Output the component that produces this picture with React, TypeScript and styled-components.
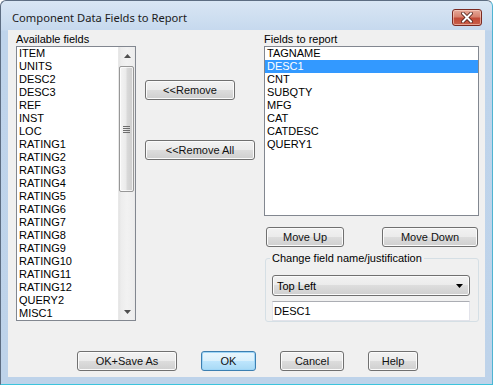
import React from 'react';
import styled, { createGlobalStyle } from 'styled-components';

const Global = createGlobalStyle`
  html, body { margin: 0; padding: 0; background: #ffffff; }
  body { font-family: "Liberation Sans", Arial, sans-serif; font-size: 11px; color: #000; }
  * { box-sizing: border-box; }
`;

const Window = styled.div`
  width: 493px;
  height: 385px;
  display: flex;
  flex-direction: column;
  border: 1px solid;
  border-color: #5d6d82 #4fb4d2 #3cc3dc #5d6d82;
  border-radius: 6px 6px 0 0;
  background: linear-gradient(to bottom, #d9e6f4 0px, #c6d9ee 29px, #bfd4eb 30px, #bed3ea 100%);
`;

const TitleBar = styled.div`
  height: 29px;
  flex: none;
  display: flex;
  align-items: flex-start;
  padding: 0 10px 0 11px;
`;

const Title = styled.div`
  font-family: "Noto Sans", "Open Sans", sans-serif;
  font-size: 11.2px;
  line-height: 16px;
  padding-top: 9px;
  color: #1b1b1b;
`;

const CloseButton = styled.div`
  margin-left: auto;
  margin-top: 8px;
  width: 30px;
  height: 17px;
  border: 1px solid #7a2a22;
  border-radius: 3px;
  background: linear-gradient(to bottom, #e6a999 0%, #d7826f 45%, #c14a37 55%, #c9604a 100%);
  box-shadow: inset 0 0 0 1px rgba(255, 220, 210, 0.55);
  display: flex;
  align-items: center;
  justify-content: center;
`;

const Client = styled.div`
  flex: 1;
  margin: 0 7px 7px 7px;
  background: #f0f0f0;
  padding: 3px 6px 6px 8px;
  display: flex;
  flex-direction: column;
`;

const Top = styled.div`
  display: flex;
  align-items: flex-start;
`;

const Column = styled.div<{ $width: number; $gap?: number }>`
  width: ${(p) => p.$width}px;
  margin-left: ${(p) => p.$gap ?? 0}px;
  display: flex;
  flex-direction: column;
`;

const Label = styled.div`
  height: 13px;
  line-height: 13px;
  white-space: nowrap;
`;

const ListBox = styled.div<{ $height: number }>`
  height: ${(p) => p.$height}px;
  border: 1px solid #828790;
  background: #fff;
  display: flex;
  overflow: hidden;
`;

const Items = styled.div`
  flex: 1;
  display: flex;
  flex-direction: column;
`;

const Item = styled.div<{ $selected?: boolean }>`
  height: 13px;
  line-height: 13px;
  padding-left: 2px;
  white-space: nowrap;
  background: ${(p) => (p.$selected ? '#3399ff' : 'transparent')};
  color: ${(p) => (p.$selected ? '#fff' : '#000')};
`;

const ScrollBar = styled.div`
  width: 17px;
  display: flex;
  flex-direction: column;
  background: linear-gradient(to right, #e3e3e3 0px, #ededed 2px, #f2f2f2 8px, #ededed 15px, #e3e3e3 17px);
  border-left: 1px solid #e8e8e8;
`;

const Arrow = styled.div`
  height: 17px;
  flex: none;
  display: flex;
  align-items: center;
  justify-content: center;
`;

const Track = styled.div`
  flex: 1;
  padding: 2px 1px 0 0;
`;

const Thumb = styled.div<{ $height: number }>`
  height: ${(p) => p.$height}px;
  border: 1px solid #979797;
  border-radius: 2px;
  background: linear-gradient(to right, #f4f4f4 0%, #ebebeb 45%, #d9d9d9 55%, #cdcdcd 100%);
  box-shadow: inset 0 0 0 1px rgba(255, 255, 255, 0.7);
  display: flex;
  align-items: center;
  justify-content: center;
`;

const Button = styled.div<{ $width: number; $default?: boolean }>`
  width: ${(p) => p.$width}px;
  height: 20px;
  flex: none;
  border: 1px solid ${(p) => (p.$default ? '#3c7fb1' : '#707070')};
  border-radius: 3px;
  background: ${(p) =>
    p.$default
      ? 'linear-gradient(to bottom, #eaf6fd 0%, #d9f0fc 50%, #bee6fd 50%, #a7d9f5 100%)'
      : 'linear-gradient(to bottom, #f2f2f2 0%, #ebebeb 50%, #dddddd 50%, #cfcfcf 100%)'};
  box-shadow: inset 0 0 0 1px ${(p) => (p.$default ? '#9fd6f7' : '#fbfbfb')};
  display: flex;
  align-items: center;
  justify-content: center;
  line-height: 13px;
  white-space: nowrap;
  color: #111;
`;

const MiddleStack = styled.div`
  margin-left: 9px;
  padding-top: 47px;
  display: flex;
  flex-direction: column;
  gap: 40px;
`;

const ButtonRow = styled.div`
  margin-top: 11px;
  padding: 0 1px 0 2px;
  display: flex;
  justify-content: space-between;
`;

const Group = styled.fieldset`
  margin: 5px 0 0 1px;
  padding: 0 8px 0 6px;
  border: 1px solid #d5dfe5;
  border-radius: 3px;
  height: 70px;
  display: flex;
  flex-direction: column;
`;

const Legend = styled.legend`
  padding: 0 2px;
  margin-left: -2px;
  line-height: 13px;
  height: 13px;
`;

const Combo = styled.div`
  margin-top: 10px;
  height: 21px;
  border: 1px solid #707070;
  border-radius: 3px;
  background: linear-gradient(to bottom, #f2f2f2 0%, #ebebeb 50%, #dddddd 50%, #cfcfcf 100%);
  box-shadow: inset 0 0 0 1px #fbfbfb;
  display: flex;
  align-items: center;
  padding: 0 6px 0 4px;
  justify-content: space-between;
`;

const TextBox = styled.div`
  margin-top: 5px;
  height: 20px;
  border: 1px solid #e2e3ea;
  border-top-color: #abadb3;
  background: #fff;
  padding-left: 1px;
  display: flex;
  align-items: center;
`;

const BottomRow = styled.div`
  margin-top: auto;
  padding-left: 61px;
  display: flex;
  gap: 24px;
`;

const available = [
  'ITEM', 'UNITS', 'DESC2', 'DESC3', 'REF', 'INST', 'LOC',
  'RATING1', 'RATING2', 'RATING3', 'RATING4', 'RATING5', 'RATING6',
  'RATING7', 'RATING8', 'RATING9', 'RATING10', 'RATING11', 'RATING12',
  'QUERY2', 'MISC1',
];

const report = ['TAGNAME', 'DESC1', 'CNT', 'SUBQTY', 'MFG', 'CAT', 'CATDESC', 'QUERY1'];

const Tri = ({ up, color }: { up?: boolean; color: string }) => (
  <svg width="7" height="4" viewBox="0 0 7 4">
    <path d={up ? 'M0 4 L3.5 0 L7 4 Z' : 'M0 0 L7 0 L3.5 4 Z'} fill={color} />
  </svg>
);

const Gripper = () => (
  <svg width="7" height="7" viewBox="0 0 7 7">
    {[0, 2, 4, 6].map((y) => (
      <rect key={y} x="0" y={y} width="7" height="1" fill="#6e6e6e" />
    ))}
  </svg>
);

const CloseX = () => (
  <svg width="12" height="11" viewBox="0 0 12 11">
    <path d="M2 1.5 L10 9.5 M10 1.5 L2 9.5" stroke="#4a1a12" strokeWidth="3.6" strokeLinecap="square" />
    <path d="M2 1.5 L10 9.5 M10 1.5 L2 9.5" stroke="#ffffff" strokeWidth="2" strokeLinecap="square" />
  </svg>
);

export default function App() {
  return (
    <>
      <Global />
      <Window>
        <TitleBar>
          <Title>Component Data Fields to Report</Title>
          <CloseButton>
            <CloseX />
          </CloseButton>
        </TitleBar>
        <Client>
          <Top>
            <Column $width={120}>
              <Label>Available fields</Label>
              <ListBox $height={275}>
                <Items>
                  {available.map((a) => (
                    <Item key={a}>{a}</Item>
                  ))}
                </Items>
                <ScrollBar>
                  <Arrow>
                    <Tri up color="#505050" />
                  </Arrow>
                  <Track>
                    <Thumb $height={126}>
                      <Gripper />
                    </Thumb>
                  </Track>
                  <Arrow>
                    <Tri color="#505050" />
                  </Arrow>
                </ScrollBar>
              </ListBox>
            </Column>
            <MiddleStack>
              <Button $width={90}>&lt;&lt;Remove</Button>
              <Button $width={110}>&lt;&lt;Remove All</Button>
            </MiddleStack>
            <Column $width={215} $gap={9}>
              <Label>Fields to report</Label>
              <ListBox $height={170}>
                <Items>
                  {report.map((r) => (
                    <Item key={r} $selected={r === 'DESC1'}>
                      {r}
                    </Item>
                  ))}
                </Items>
              </ListBox>
              <ButtonRow>
                <Button $width={78}>Move Up</Button>
                <Button $width={96}>Move Down</Button>
              </ButtonRow>
              <Group>
                <Legend>Change field name/justification</Legend>
                <Combo>
                  <span>Top Left</span>
                  <Tri color="#000" />
                </Combo>
                <TextBox>DESC1</TextBox>
              </Group>
            </Column>
          </Top>
          <BottomRow>
            <Button $width={100}>OK+Save As</Button>
            <Button $width={55} $default>
              OK
            </Button>
            <Button $width={64}>Cancel</Button>
            <Button $width={50}>Help</Button>
          </BottomRow>
        </Client>
      </Window>
    </>
  );
}
